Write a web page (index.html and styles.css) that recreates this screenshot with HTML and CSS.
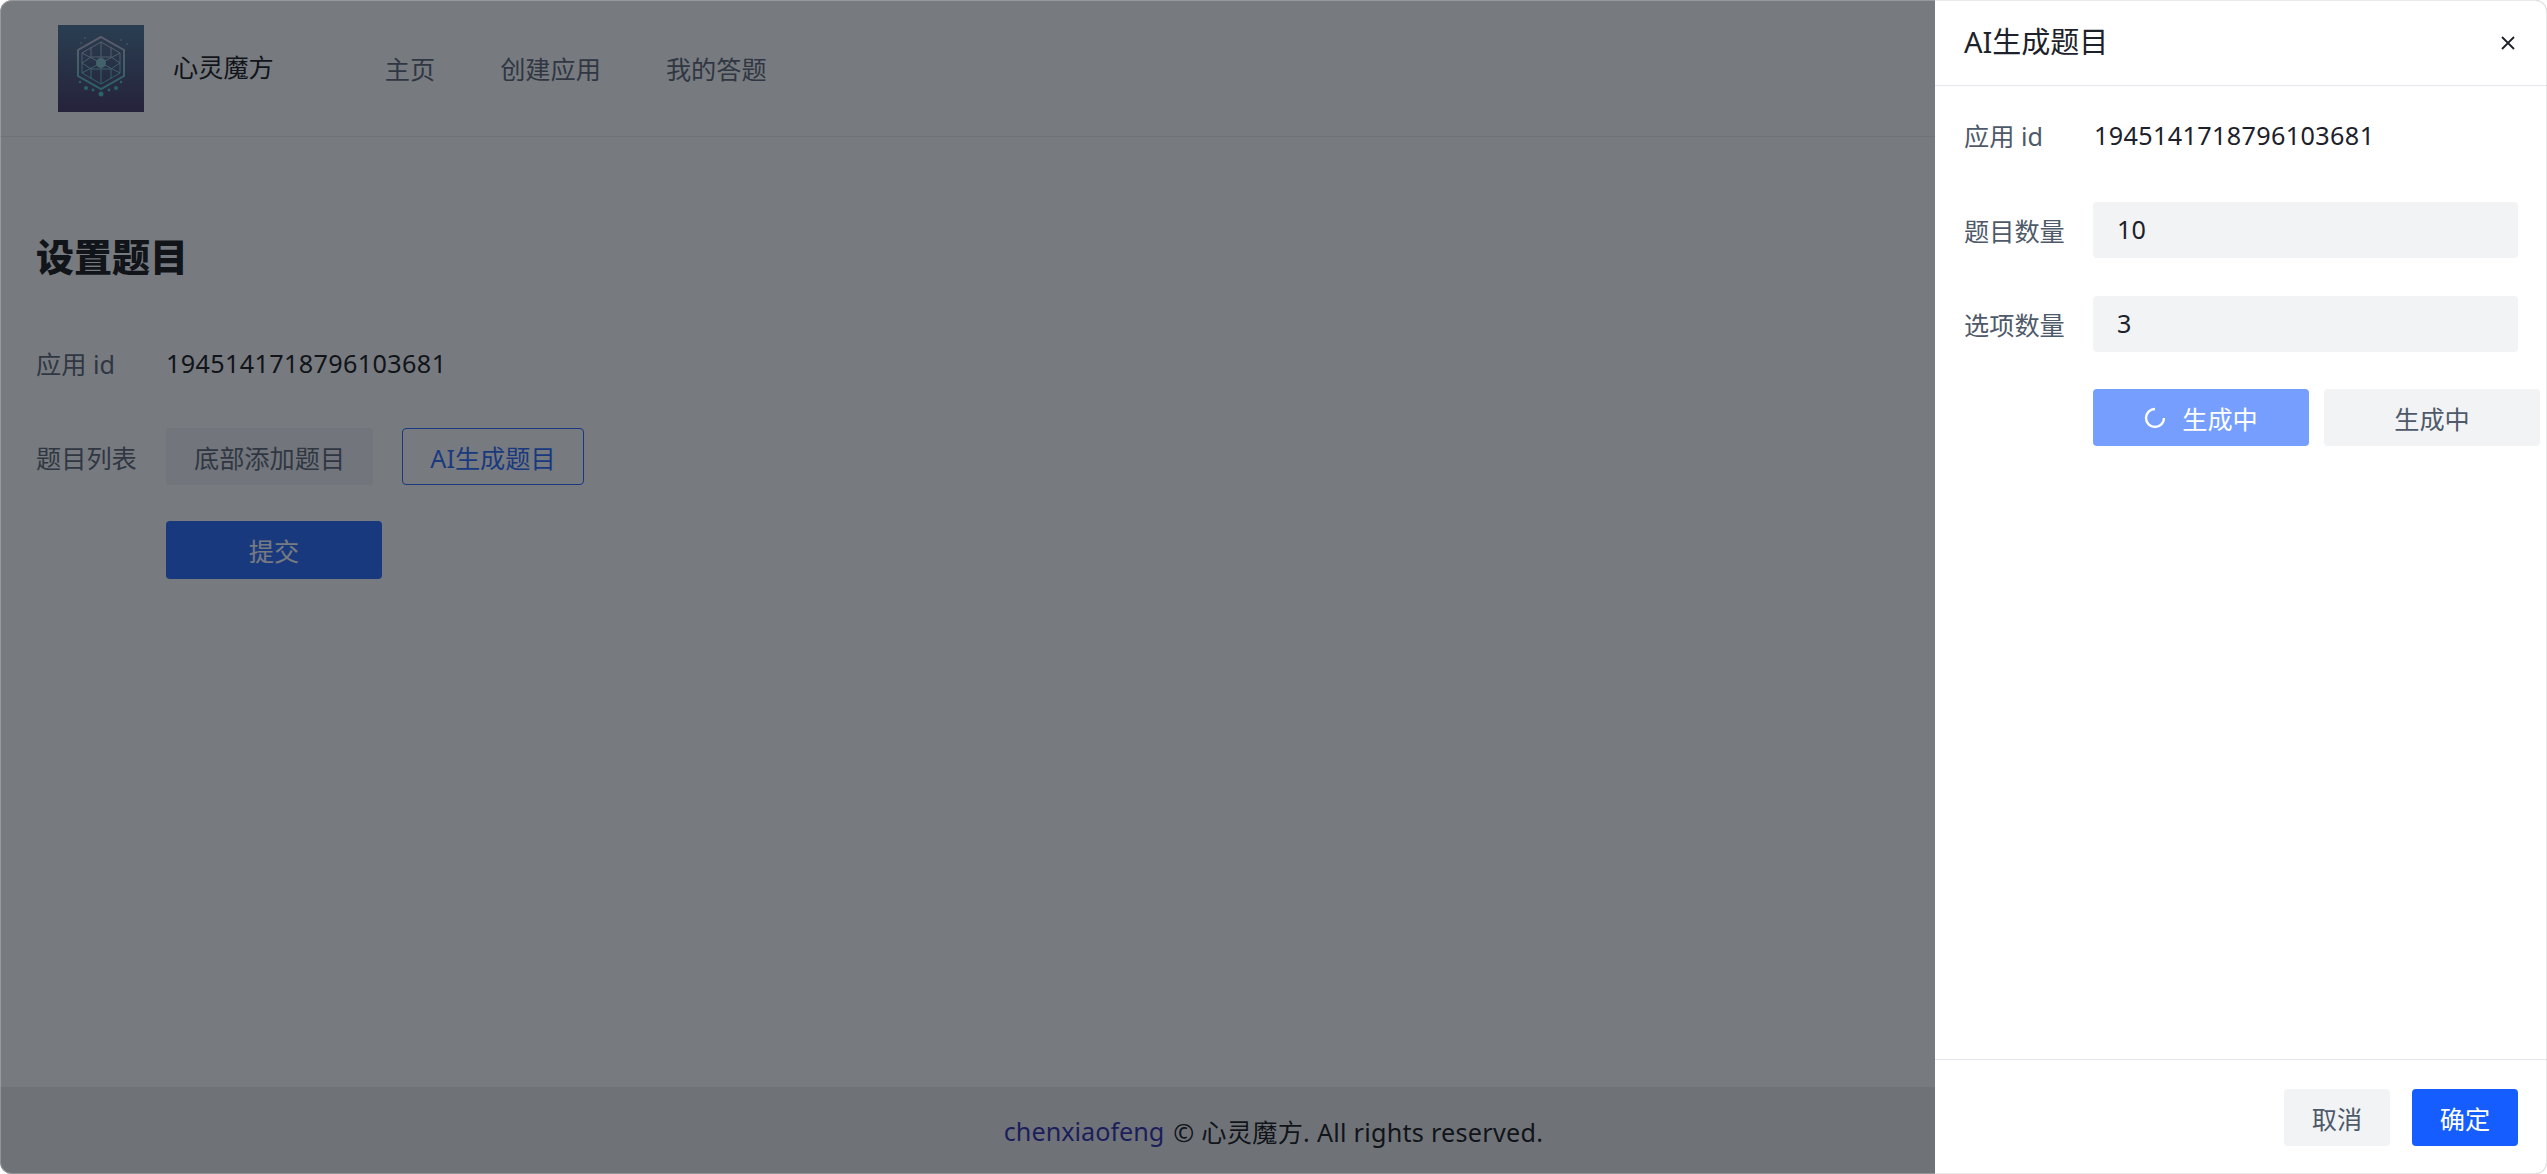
FILE: index.html
```html
<!doctype html>
<html>
  <head>
    <title>心灵魔方</title>
    <meta charset="utf-8">
    <link rel="stylesheet" href="styles.css">
  </head>
  <body>
    <div class="window">
      <div class="page">
        <div class="header">
          <svg class="logo" viewBox="0 0 86 87">
            <defs>
              <linearGradient id="logoBg" x1="0" y1="0" x2="0" y2="1">
                <stop offset="0" stop-color="#3f6b8d"/>
                <stop offset="1" stop-color="#342555"/>
              </linearGradient>
              <linearGradient id="logoLine" x1="0" y1="0" x2="0" y2="1">
                <stop offset="0" stop-color="#c9b4d4"/>
                <stop offset="1" stop-color="#3fc4c0"/>
              </linearGradient>
            </defs>
            <rect width="86" height="87" fill="url(#logoBg)"/>
            <g fill="none" stroke="url(#logoLine)">
              <path stroke-width="2" d="M43 12 L66 25 V51 L43 64 L20 51 V25 Z"/>
              <path stroke-width="1" d="M43 17 L62 28 V48 L43 59 L24 48 V28 Z"/>
              <path stroke-width="1" d="M43 17 V59 M24 28 L62 48 M62 28 L24 48"/>
              <path stroke-width="1" d="M33 22 V32 L24 38 L33 44 V54 M53 22 V32 L62 38 L53 44 V54 M33 32 H53 M33 44 H53"/>
            </g>
            <circle cx="43" cy="38" r="5" fill="#7fc4cb"/>
            <g fill="#3fc4c0">
              <circle cx="43" cy="69" r="2.5"/>
              <circle cx="28" cy="63" r="2"/>
              <circle cx="58" cy="63" r="2"/>
              <circle cx="35" cy="65" r="1.4"/>
              <circle cx="51" cy="65" r="1.4"/>
              <circle cx="22" cy="57" r="1.2"/>
              <circle cx="63" cy="57" r="1.2"/>
            </g>
            <g fill="#7d93a8">
              <circle cx="23" cy="18" r="1"/>
              <circle cx="63" cy="15" r="1"/>
              <circle cx="69" cy="19" r="1"/>
              <circle cx="27" cy="13" r="1"/>
            </g>
          </svg>
          <div class="brand">心灵魔方</div>
          <div class="nav">
            <a class="nav-item">主页</a>
            <a class="nav-item">创建应用</a>
            <a class="nav-item">我的答题</a>
          </div>
        </div>
        <div class="content">
          <h2 class="title">设置题目</h2>
          <div class="row row-id">
            <label class="label">应用 id</label>
            <span class="value">1945141718796103681</span>
          </div>
          <div class="row row-list">
            <label class="label">题目列表</label>
            <button class="btn btn-gray btn-add">底部添加题目</button>
            <button class="btn btn-outline btn-ai">AI生成题目</button>
          </div>
          <div class="row">
            <span class="label"></span>
            <button class="btn btn-primary btn-submit">提交</button>
          </div>
        </div>
        <div class="footer">
          <a class="author">chenxiaofeng</a> © 心灵魔方. All rights reserved.
        </div>
      </div>
      <div class="mask"></div>
      <div class="drawer">
        <div class="drawer-head">
          <span class="drawer-title">AI生成题目</span>
          <svg class="close" viewBox="0 0 14 14">
            <path d="M1 1 L13 13 M13 1 L1 13"/>
          </svg>
        </div>
        <div class="drawer-body">
          <div class="field field-id">
            <label class="field-label">应用 id</label>
            <span class="value">1945141718796103681</span>
          </div>
          <div class="field">
            <label class="field-label">题目数量</label>
            <div class="input">10</div>
          </div>
          <div class="field">
            <label class="field-label">选项数量</label>
            <div class="input">3</div>
          </div>
          <div class="actions">
            <button class="btn btn-loading">
              <svg class="spinner" viewBox="0 0 22 22">
                <path d="M11 2 A9 9 0 1 0 20 11"/>
              </svg>
              生成中
            </button>
            <button class="btn btn-gray">生成中</button>
          </div>
        </div>
        <div class="drawer-foot">
          <button class="btn btn-gray btn-small">取消</button>
          <button class="btn btn-primary btn-small">确定</button>
        </div>
      </div>
    </div>
  </body>
</html>
```

FILE: styles.css
```css
html, body {
  margin: 0;
  height: 100%;
  background: #fff;
}
body {
  font-family: "Noto Sans", "Noto Sans CJK SC", sans-serif;
  font-size: 25.2px;
  color: #000;
  overflow: hidden;
}
button {
  font-family: inherit;
  font-size: 25.2px;
}
.window {
  position: relative;
  height: 100%;
  border-radius: 12px;
  overflow: hidden;
  background: #fff;
}
.window::after {
  content: "";
  position: absolute;
  top: 0;
  left: 0;
  right: 0;
  bottom: 0;
  border: 1px solid rgba(200, 200, 200, .4);
  border-radius: 12px;
  pointer-events: none;
}
.page {
  height: 100%;
  display: flex;
  flex-direction: column;
}
.header {
  height: 137px;
  box-sizing: border-box;
  flex: none;
  display: flex;
  align-items: center;
  padding: 0 0 0 58px;
  border-bottom: 1px solid #eaebee;
}
.logo {
  width: 86px;
  height: 87px;
  flex: none;
}
.brand {
  margin-left: 29px;
  margin-right: 111px;
  line-height: 1;
}
.nav {
  display: flex;
  gap: 65px;
}
.nav-item {
  color: #4e5969;
}
.content {
  flex: 1;
  padding: 0 36px;
}
.title {
  font-size: 38px;
  font-weight: 800;
  line-height: 50px;
  margin: 94px 0 0 0;
}
.row {
  display: flex;
  align-items: center;
}
.row-id {
  margin-top: 60px;
  height: 44px;
}
.row-list {
  margin-top: 43px;
  margin-bottom: 36px;
}
.label {
  width: 130px;
  flex: none;
  color: #4e5969;
}
.value {
  letter-spacing: .35px;
}
.btn {
  height: 57px;
  box-sizing: border-box;
  border: 1px solid transparent;
  border-radius: 4px;
  padding: 0;
  display: flex;
  align-items: center;
  justify-content: center;
}
.btn-gray {
  background: #f2f3f5;
  color: #4e5969;
}
.btn-outline {
  background: transparent;
  color: #165dff;
  border-color: #165dff;
}
.btn-primary {
  background: #165dff;
  color: #fff;
}
.btn-add {
  width: 207px;
  margin-right: 29px;
}
.btn-ai {
  width: 182px;
}
.btn-submit {
  width: 216px;
  height: 58px;
}
.footer {
  height: 87px;
  flex: none;
  background: #ebedee;
  display: flex;
  align-items: center;
  justify-content: center;
  gap: 9px;
  letter-spacing: .25px;
}
.author {
  color: #1a1aa6;
  letter-spacing: 0;
}
.mask {
  position: absolute;
  top: 0;
  left: 0;
  right: 0;
  bottom: 0;
  background: rgba(29, 33, 41, .6);
}
.drawer {
  position: absolute;
  top: 0;
  right: 0;
  bottom: 0;
  width: 612px;
  background: #fff;
  color: #1d2129;
  display: flex;
  flex-direction: column;
}
.drawer-head {
  height: 85px;
  flex: none;
  display: flex;
  align-items: center;
  justify-content: space-between;
  padding: 0 32px 0 29px;
  border-bottom: 1px solid #e5e6eb;
}
.drawer-title {
  font-size: 29px;
  line-height: 1;
  margin-top: -2px;
}
.close {
  width: 14px;
  height: 14px;
  fill: none;
  stroke: #1d2129;
  stroke-width: 1.8;
}
.drawer-body {
  flex: 1;
  padding: 29px 29px 0 29px;
}
.field {
  display: flex;
  align-items: center;
  margin-bottom: 38px;
}
.field-id {
  height: 44px;
  margin-top: -2px;
  margin-bottom: 45px;
}
.field-id .field-label {
  width: 130px;
}
.field-label {
  width: 129px;
  flex: none;
  color: #4e5969;
}
.input {
  flex: 1;
  height: 56px;
  line-height: 54px;
  background: #f2f3f5;
  border-radius: 4px;
  padding-left: 24px;
}
.actions {
  display: flex;
  gap: 15px;
  margin-top: -1px;
  margin-left: 129px;
  margin-right: -22px;
}
.actions .btn {
  width: 216px;
}
.btn-loading {
  background: #759eff;
  color: #fff;
  gap: 16px;
}
.spinner {
  width: 22px;
  height: 22px;
  fill: none;
  stroke: #fff;
  stroke-width: 2.4;
}
.drawer-foot {
  height: 115px;
  flex: none;
  box-sizing: border-box;
  border-top: 1px solid #e5e6eb;
  display: flex;
  justify-content: flex-end;
  gap: 22px;
  padding: 29px 29px 0 0;
}
.btn-small {
  width: 106px;
}
```
